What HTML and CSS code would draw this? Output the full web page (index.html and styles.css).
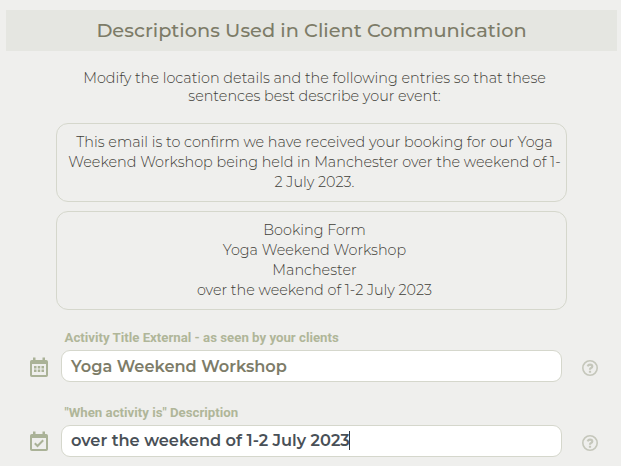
FILE: index.html
```
<!DOCTYPE html>
<html lang="en">
<head>
<meta charset="utf-8">
<title>Descriptions Used in Client Communication</title>
<link rel="stylesheet" href="styles.css">
</head>
<body>
<main class="page">
  <h1 class="heading">Descriptions Used in Client Communication</h1>
  <p class="intro"><span class="line">Modify the location details and the following entries so that these</span> <span class="line">sentences best describe your event:</span></p>
  <section class="preview">
    <span class="line">This email is to confirm we have received your booking for our Yoga</span>
    <span class="line">Weekend Workshop being held in Manchester over the weekend of 1-</span>
    <span class="line">2 July 2023.</span>
  </section>
  <section class="preview form">
    <span class="line">Booking Form</span>
    <span class="line">Yoga Weekend Workshop</span>
    <span class="line">Manchester</span>
    <span class="line">over the weekend of 1-2 July 2023</span>
  </section>
  <div class="field">
    <div class="label">Activity Title External - as seen by your clients</div>
    <div class="row">
      <svg class="calendar days" viewBox="0 0 18 20"><path fill-rule="evenodd" d="M3 .5h2.500V3h7V.5H15V3h1.200A1.800 1.800 0 0 1 18 4.800V18.200A1.800 1.800 0 0 1 16.200 20H1.800A1.800 1.800 0 0 1 0 18.200V4.800A1.800 1.800 0 0 1 1.800 3H3zM2 7v11h14V7z"/><path d="M4 9h2.500v2.500H4zM7.750 9h2.500v2.500h-2.500zM11.500 9H14v2.500h-2.500zM4 12.500h2.500V15H4zM7.750 12.500h2.500V15h-2.500zM11.500 12.500H14V15h-2.500z"/></svg>
      <div class="input">Yoga Weekend Workshop</div>
      <svg class="help" viewBox="0 0 16 16"><circle cx="8" cy="8" r="7.200"/><path class="mark" d="M5.600 6.300Q6.300 4.600 8 4.600Q10.300 4.600 10.300 6.400Q10.300 7.500 9 8.100Q8 8.500 8 9.700M8 10.800v1.900"/></svg>
    </div>
  </div>
  <div class="field">
    <div class="label">"When activity is" Description</div>
    <div class="row">
      <svg class="calendar" viewBox="0 0 18 20"><path fill-rule="evenodd" d="M3 .5h2.500V3h7V.5H15V3h1.200A1.800 1.800 0 0 1 18 4.800V18.200A1.800 1.800 0 0 1 16.200 20H1.800A1.800 1.800 0 0 1 0 18.200V4.800A1.800 1.800 0 0 1 1.800 3H3zM2 7v11h14V7z"/><path class="tick" d="M4.800 12.300l2.700 2.700 5.700-5.700"/></svg>
      <div class="input active">over the weekend of 1-2 July 2023<i class="caret"></i></div>
      <svg class="help" viewBox="0 0 16 16"><circle cx="8" cy="8" r="7.200"/><path class="mark" d="M5.600 6.300Q6.300 4.600 8 4.600Q10.300 4.600 10.300 6.400Q10.300 7.500 9 8.100Q8 8.500 8 9.700M8 10.800v1.900"/></svg>
    </div>
  </div>
</main>
</body>
</html>
```
FILE: styles.css
```
* { box-sizing: border-box; }
body { margin: 0; background: #efefed; color: #3f4038; font-family: Montserrat, Inter, sans-serif; font-size: 14.36px; font-weight: 300; }
.page { height: 466px; overflow: hidden; padding: 10px 4px 0 6px; }
.line { display: block; white-space: nowrap; }
.heading { margin: 0; height: 41px; line-height: 41px; background: #e5e6e1; color: #7d7c68; font-size: 19.35px; font-weight: 500; text-align: center; }
.intro { margin: 18px 0 0; padding-left: 6px; line-height: 18px; text-align: center; }
.preview { display: flex; flex-direction: column; align-items: center; width: 511px; height: 79px; margin: 18px 0 0 50px; padding: 8px 0 0 6px; border: 1px solid #d5d7cc; border-radius: 12px; line-height: 20px; }
.form { height: 99px; margin-top: 9px; }
.field { height: 75px; }
.form + .field { margin-top: 19px; }
.label { height: 21px; padding-left: 58.500px; color: #b0b699; font: bold 13.24px/18px Roboto, sans-serif; }
.row { display: flex; align-items: center; height: 32px; padding-left: 24px; }
.calendar { width: 18px; height: 20px; margin-right: 13px; fill: #aab297; }
.days { margin-top: 2px; }
.tick { fill: none; stroke: #aab297; stroke-width: 2; }
.input { display: flex; align-items: center; width: 501px; height: 32px; padding-left: 9px; border: 1px solid #d5d7cc; border-radius: 9px; background: #fff; color: #7d7c68; font-size: 16.2px; font-weight: 600; }
.active { padding-bottom: 2px; color: #495057; }
.caret { width: 1px; height: 19px; margin-left: -1px; background: #333b45; }
.help { width: 16px; height: 16px; margin: 4px 0 0 20px; fill: none; stroke: #c5c7bb; stroke-width: 1.600; }
.mark { stroke-width: 2.200; }
```
